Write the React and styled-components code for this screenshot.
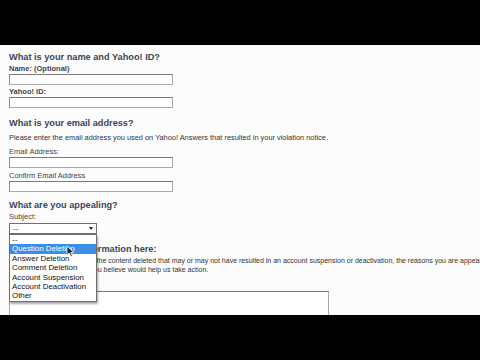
import React from "react"
import styled, { createGlobalStyle } from "styled-components"

const GlobalStyle = createGlobalStyle`
  html, body {
    margin: 0;
    padding: 0;
    background: #000;
  }
  body {
    font-family: "Liberation Sans", Arial, sans-serif;
  }
`

const Frame = styled.div`
  width: 480px;
  height: 360px;
  background: #000;
  display: flex;
  flex-direction: column;
  overflow: hidden;
`

const Letterbox = styled.div`
  height: 45px;
  flex: none;
  background: #000;
`

const Page = styled.div`
  position: relative;
  height: 270px;
  flex: none;
  background: #fcfcfc;
  overflow: hidden;
  padding: 6px 0 0 9px;
  box-sizing: border-box;
  display: flex;
  flex-direction: column;
  align-items: flex-start;

  & > * {
    flex-shrink: 0;
  }
`

const Heading = styled.h3`
  margin: ${(p) => p.$gap ?? 7}px 0 0;
  font-size: 9.2px;
  line-height: 12px;
  font-weight: bold;
  color: #3a4659;
  white-space: nowrap;
`

const Label = styled.label`
  margin-top: ${(p) => p.$gap ?? 2}px;
  font-size: 7.5px;
  line-height: 10px;
  font-weight: ${(p) => (p.$bold ? "bold" : "normal")};
  color: #444;
  white-space: nowrap;
`

const Text = styled.p`
  margin: ${(p) => p.$gap ?? 3}px 0 0;
  font-size: ${(p) => p.$size || 7.4}px;
  line-height: ${(p) => p.$lh || 10}px;
  color: #333;
  white-space: nowrap;
`

const Input = styled.div`
  width: 164px;
  height: 11px;
  box-sizing: border-box;
  background: #fff;
  border: 1px solid #a8a8a8;
  border-top-color: #7a7a7a;
  border-left-color: #8a8a8a;
`

const SelectWrap = styled.div`
  position: relative;
  margin-top: 1px;
`

const Select = styled.div`
  width: 88px;
  height: 11px;
  box-sizing: border-box;
  border: 1px solid #6f6f6f;
  background: #fff;
  display: flex;
  align-items: center;
  justify-content: space-between;
  padding: 0 3px 0 3px;
  font-size: 8px;
  color: #333;
`

const Arrow = styled.span`
  width: 0;
  height: 0;
  border-left: 2.5px solid transparent;
  border-right: 2.5px solid transparent;
  border-top: 3px solid #222;
`

const Options = styled.ul`
  position: absolute;
  top: 11px;
  left: 0;
  z-index: 2;
  width: 88px;
  margin: 0;
  padding: 0;
  list-style: none;
  background: #fff;
  border: 1px solid #6f6f6f;
  box-sizing: border-box;
  box-shadow: 1px 2px 2px rgba(0, 0, 0, 0.35);
`

const Option = styled.li`
  height: 9.4px;
  line-height: 9.4px;
  padding-left: 2px;
  font-size: 7.9px;
  color: ${(p) => (p.$active ? "#fff" : "#111")};
  background: ${(p) => (p.$active ? "#3a8ee8" : "transparent")};
  white-space: nowrap;
`

const Cursor = styled.svg`
  position: absolute;
  left: 57px;
  top: 22px;
  z-index: 3;
`

const TextArea = styled.div`
  margin-top: 5px;
  width: 320px;
  height: 60px;
  box-sizing: border-box;
  background: #fff;
  border: 1px solid #a8a8a8;
  border-top-color: #7a7a7a;
`

const options = [
  "--",
  "Question Deletion",
  "Answer Deletion",
  "Comment Deletion",
  "Account Suspension",
  "Account Deactivation",
  "Other",
]

export default function App() {
  return (
    <>
      <GlobalStyle />
      <Frame>
        <Letterbox />
        <Page>
          <Heading $gap={0}>What is your name and Yahoo! ID?</Heading>
          <Label $bold $gap={1}>Name: (Optional)</Label>
          <Input />
          <Label $bold>Yahoo! ID:</Label>
          <Input />

          <Heading $gap={9}>What is your email address?</Heading>
          <Text $gap={4}>
            Please enter the email address you used on Yahoo! Answers that resulted in your violation notice.
          </Text>
          <Label $gap={4}>Email Address:</Label>
          <Input />
          <Label $gap={3}>Confirm Email Address</Label>
          <Input />

          <Heading>What are you appealing?</Heading>
          <Label $gap={1}>Subject:</Label>
          <SelectWrap>
            <Select>
              <span>--</span>
              <Arrow />
            </Select>
            <Options>
              {options.map((o, i) => (
                <Option key={o} $active={i === 1}>
                  {o}
                </Option>
              ))}
            </Options>
            <Cursor width="9" height="13" viewBox="0 0 9 13">
              <path d="M1 1 L1 10 L3.2 8 L4.8 11.8 L6.3 11.1 L4.8 7.5 L7.8 7.5 Z" fill="#222" stroke="#fff" strokeWidth="0.8" />
            </Cursor>
          </SelectWrap>

          <Heading $gap={9}>Enter additional information here:</Heading>
          <Text $gap={2} $lh={8.5} $size={7}>
            Please give a description of the content deleted that may or may not have resulted in an account suspension or deactivation, the reasons you are appealing, and
            <br />
            any other information that you believe would help us take action.
          </Text>
          <Label $gap={2}>Description:</Label>
          <TextArea />
        </Page>
        <Letterbox />
      </Frame>
    </>
  )
}
